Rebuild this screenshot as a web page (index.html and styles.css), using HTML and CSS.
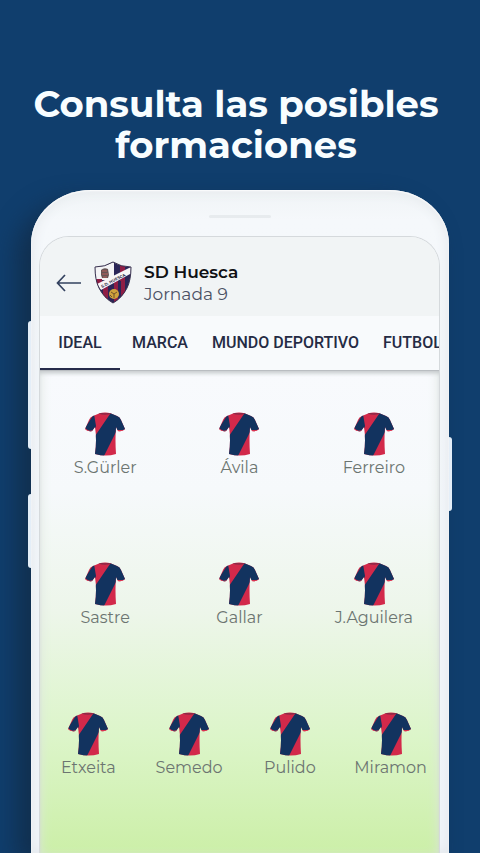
FILE: index.html
```html
<!DOCTYPE html>
<html lang="es">
<head>
    <meta charset="UTF-8">
    <meta name="viewport" content="width=device-width, initial-scale=1.0">
    <title>Posibles formaciones</title>
    <link rel="stylesheet" href="styles.css">
</head>
<body>
    <!-- shared shirt drawing -->
    <svg class="defs" aria-hidden="true">
        <defs>
            <clipPath id="shirtShape">
                <path d="M14 1.500Q20 -.5 26 1.500L32 4Q35 5 36 8L40 17Q37 20 33 19L31 15Q30 28 31 42Q21 45 10 42Q12 28 10 15L7 19Q3 20 0 17L4 8Q5 5 8 4Z"/>
            </clipPath>
            <symbol id="shirt" viewBox="0 0 40 44">
                <g clip-path="url(#shirtShape)">
                    <rect width="40" height="44" fill="#d2294a"/>
                    <path d="M26 0H40V18H32L19 44H8V27L25 2Z" fill="#12335f"/>
                    <path d="M9 2L0 16L8 22L11 14Z" fill="#12335f"/>
                    <path d="M0 17Q4 20 8 18L7 21H0ZM40 17Q36 20 32 18L33 21H40Z" fill="#e0415a"/>
                    <path d="M14 1Q20 3 26 1" fill="none" stroke="#8c2947" stroke-width="1.500"/>
                </g>
            </symbol>
        </defs>
    </svg>

    <h1>Consulta las posibles formaciones</h1>

    <div class="phone">
        <span class="side-button volume-up"></span>
        <span class="side-button volume-down"></span>
        <span class="side-button power"></span>
        <div class="speaker"></div>
        <main class="screen">
            <header>
                <button class="back" aria-label="Volver">
                    <svg width="26" height="20" viewBox="0 0 26 20" fill="none" stroke="#33415f" stroke-width="1.700">
                        <path d="M25 10H2M9 2L1.500 10L9 18"/>
                    </svg>
                </button>
                <svg class="crest" width="38" height="43" viewBox="0 0 38 43" aria-hidden="true">
                    <defs>
                        <clipPath id="shield">
                            <path d="M1 6Q11 6 19 1Q27 6 37 6Q37 19 33 27Q28 37 19 42Q10 37 5 27Q1 19 1 6Z"/>
                        </clipPath>
                    </defs>
                    <g clip-path="url(#shield)">
                        <rect width="38" height="43" fill="#2b2557"/>
                        <path d="M0 0H20V19L0 19Z" fill="#f4f3f5"/>
                        <path d="M26 2H31V20H26ZM2 18H8V25H2ZM27 16H31V38H27ZM20 18H24V43H20ZM9 25H14V38H9Z" fill="#8f1d45"/>
                        <path d="M7 9Q10 6 14 8L15 14L14 17H8L7 14Z" fill="#665454"/>
                        <path d="M8 10H13M8 13H14M9 16H13" stroke="#b9605f"/>
                        <path d="M3 23L37 6L38 12L7 29Z" fill="#f7f5f7"/>
                        <path id="band" d="M8 27L37 12" fill="none"/>
                        <circle cx="20" cy="33" r="5" fill="#d0a23c"/>
                        <path d="M17 31L20 33L23 31M20 33V37M16 34L18 36" fill="none" stroke="#72502d"/>
                    </g>
                    <text class="crest-text" fill="#333047"><textPath href="#band">S.D. HUESCA</textPath></text>
                    <path d="M1 6Q11 6 19 1Q27 6 37 6Q37 19 33 27Q28 37 19 42Q10 37 5 27Q1 19 1 6Z" fill="none" stroke="#39324f"/>
                </svg>
                <div class="team">
                    <h2>SD Huesca</h2>
                    <p>Jornada 9</p>
                </div>
            </header>
            <nav>
                <a class="active" href="#ideal">IDEAL</a>
                <a href="#marca">MARCA</a>
                <a href="#mundo">MUNDO DEPORTIVO</a>
                <a href="#futbol">FUTBOL</a>
            </nav>
            <section class="pitch" id="ideal">
                <div class="line">
                    <div class="player"><svg><use href="#shirt"/></svg>S.Gürler</div>
                    <div class="player"><svg><use href="#shirt"/></svg>Ávila</div>
                    <div class="player"><svg><use href="#shirt"/></svg>Ferreiro</div>
                </div>
                <div class="line">
                    <div class="player"><svg><use href="#shirt"/></svg>Sastre</div>
                    <div class="player"><svg><use href="#shirt"/></svg>Gallar</div>
                    <div class="player"><svg><use href="#shirt"/></svg>J.Aguilera</div>
                </div>
                <div class="line">
                    <div class="player"><svg><use href="#shirt"/></svg>Etxeita</div>
                    <div class="player"><svg><use href="#shirt"/></svg>Semedo</div>
                    <div class="player"><svg><use href="#shirt"/></svg>Pulido</div>
                    <div class="player"><svg><use href="#shirt"/></svg>Miramon</div>
                </div>
            </section>
        </main>
    </div>
</body>
</html>
```

FILE: styles.css
```css
* {
    box-sizing: border-box;
}
body {
    font-family: Montserrat, Inter, sans-serif;
    margin: 0;
    min-height: 100vh;
    display: flex;
    flex-direction: column;
    background-color: #103e6d;
    overflow-x: hidden;
}
h1, h2, p {
    margin: 0;
}
.defs {
    position: absolute;
    width: 0;
    height: 0;
}
h1 {
    padding: 83px 32px 25px 24px;
    color: #f8fdff;
    font-size: 37px;
    font-weight: 700;
    line-height: 41px;
    text-align: center;
}
.phone {
    position: relative;
    flex: 1;
    display: flex;
    flex-direction: column;
    margin: 0 31px;
    padding: 0 9px 0 8px;
    border-radius: 60px 60px 0 0 / 54px 54px 0 0;
    background: linear-gradient(#f0f4f6, #f5f8fb 30px, #f1f5fa);
    box-shadow: inset 0 1px 2px #ffffff, inset 0 0 14px #e1e5e9, -14px 12px 24px #112f4e;
}
.side-button {
    position: absolute;
    width: 3px;
    background-color: #e4eef8;
}
.volume-up {
    left: -3px;
    top: 131px;
    height: 128px;
    border-radius: 3px 0 0 3px;
}
.volume-down {
    left: -3px;
    top: 304px;
    height: 74px;
    border-radius: 3px 0 0 3px;
}
.power {
    right: -3px;
    top: 247px;
    height: 74px;
    border-radius: 0 3px 3px 0;
}
.speaker {
    width: 62px;
    height: 3px;
    margin: 25px auto 18px;
    border-radius: 2px;
    background-color: #e7ebee;
}
.screen {
    flex: 1;
    display: flex;
    flex-direction: column;
    border: 1px solid #d5d9dc;
    border-bottom: 0;
    border-radius: 30px 30px 0 0;
    overflow: hidden;
}
header {
    display: flex;
    align-items: center;
    height: 79px;
    padding: 12px 16px 0;
    background-color: #f1f4f5;
}
.back {
    display: flex;
    padding: 0;
    border: none;
    background: none;
    cursor: pointer;
}
.crest {
    margin: 0 12px;
}
.crest-text {
    font-size: 4px;
    font-weight: 700;
}
.team h2 {
    color: #101114;
    font-size: 17px;
    font-weight: 600;
    line-height: 22px;
}
.team p {
    color: #4b5164;
    font-size: 17px;
    line-height: 22px;
}
nav {
    display: flex;
    flex-shrink: 0;
    overflow: hidden;
    background-color: #f8fafc;
}
nav a {
    flex-shrink: 0;
    min-width: 80px;
    padding: 1px 12px 0;
    border-bottom: 2px solid transparent;
    color: #252b44;
    font-family: Roboto, sans-serif;
    font-size: 16px;
    font-weight: 500;
    line-height: 51px;
    text-align: center;
    text-decoration: none;
}
nav a.active {
    border-color: #262b4b;
}
.pitch {
    flex: 1;
    padding-top: 41px;
    border-top: 1px solid #b9bdc1;
    background: linear-gradient(#f8fafd, #f6f9fb 25%, #edf6ea 50%, #dcf5c9 76%, #ccefa8);
    box-shadow: inset 0 4px 4px -2px #c3c7ca, inset 6px 0 12px -6px #dce3df, inset -6px 0 12px -6px #dce3df;
}
.line {
    display: flex;
    height: 150px;
    margin: 0 -2px;
}
.line:last-child {
    height: 80px;
}
.player {
    flex: 1;
    display: flex;
    flex-direction: column;
    align-items: center;
    color: #6c7571;
    font-size: 16px;
    line-height: 24px;
}
.player svg {
    width: 42px;
    height: 44px;
}
```
